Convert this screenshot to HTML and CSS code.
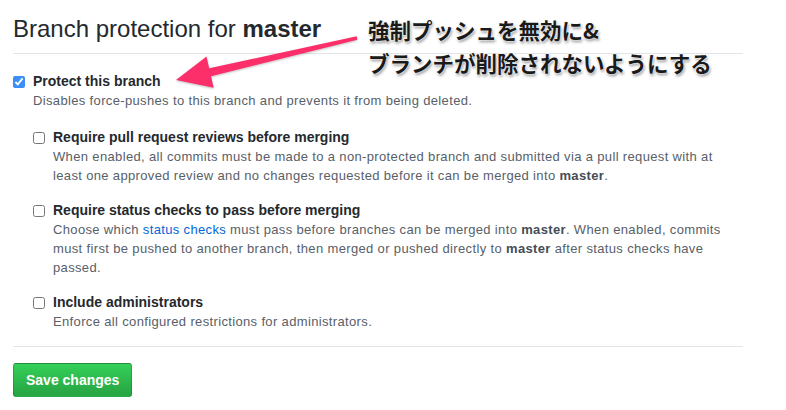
FILE: index.html
```html
<!DOCTYPE html>
<html lang="en">
<head>
    <meta charset="UTF-8">
    <meta name="viewport" content="width=device-width, initial-scale=1.0">
    <title>Branch protection</title>

    <link rel="stylesheet" href="styles.css">

</head>
<body>

    <div class="page">
        <!-- 标题 -->
        <div class="subhead">
            <h2>Branch protection for <strong>master</strong></h2>
        </div>

        <!-- 保护分支 -->
        <div class="option">
            <input type="checkbox" checked>
            <div>
                <p class="label">Protect this branch</p>
                <p class="note">Disables force-pushes to this branch and prevents it from being deleted.</p>

                <div class="option">
                    <input type="checkbox">
                    <div>
                        <p class="label">Require pull request reviews before merging</p>
                        <p class="note">When enabled, all commits must be made to a non-protected branch and submitted via a pull request with at least one approved review and no changes requested before it can be merged into <strong>master</strong>.</p>
                    </div>
                </div>

                <div class="option">
                    <input type="checkbox">
                    <div>
                        <p class="label">Require status checks to pass before merging</p>
                        <p class="note">Choose which <a href="#">status checks</a> must pass before branches can be merged into <strong>master</strong>. When enabled, commits must first be pushed to another branch, then merged or pushed directly to <strong>master</strong> after status checks have passed.</p>
                    </div>
                </div>

                <div class="option">
                    <input type="checkbox">
                    <div>
                        <p class="label">Include administrators</p>
                        <p class="note">Enforce all configured restrictions for administrators.</p>
                    </div>
                </div>
            </div>
        </div>

        <div class="actions">
            <button class="btn">Save changes</button>
        </div>
    </div>

    <!-- 注释 -->
    <div class="callout">
        <p>強制プッシュを無効に&amp;</p>
        <p>ブランチが削除されないようにする</p>
    </div>

    <svg class="arrow" width="210" height="80" viewBox="160 25 210 80">
        <polygon points="356.7,36.3 209.2,68.2 206.5,56.5 176,80 213.7,87.7 211,76.2 357.3,39.7" fill="#fd2f6b"/>
    </svg>

</body>
</html>
```

FILE: styles.css
```css
body {
    margin: 0;
    background: #fff;
    color: #24292e;
    font-family: "Liberation Sans", Arial, sans-serif;
    font-size: 14px;
}
p {
    margin: 0;
}
.page {
    width: 730px;
    padding-left: 13px;
}

.subhead {
    padding-top: 14px;
    padding-bottom: 9px;
    border-bottom: 1px solid #e1e4e8;
}
.subhead h2 {
    margin: 0;
    font-size: 24px;
    font-weight: normal;
    line-height: 30px;
}

.option {
    display: grid;
    grid-template-columns: 20px 1fr;
    margin-top: 17px;
}
.option + .option {
    margin-top: 15px;
}
.option input {
    width: 12px;
    height: 12px;
    margin: 5px 0 0 0;
    accent-color: #3b8ef5;
}
.label {
    font-weight: bold;
    line-height: 20px;
}
.note {
    font-size: 13px;
    letter-spacing: 0.35px;
    line-height: 19px;
    color: #586069;
}
.note strong {
    color: #444d56;
}
.note a {
    color: #0366d6;
    text-decoration: none;
}

.actions {
    margin-top: 15px;
    padding-top: 16px;
    border-top: 1px solid #e1e4e8;
}
.btn {
    font-family: inherit;
    font-size: 14px;
    font-weight: bold;
    line-height: 20px;
    padding: 6px 12px;
    color: #fff;
    background-color: #28a745;
    background-image: linear-gradient(-180deg, #34d058 0%, #28a745 90%);
    border: 1px solid rgba(27, 31, 35, 0.2);
    border-radius: 3px;
}

.callout {
    position: absolute;
    left: 368px;
    top: 13px;
    font-family: "Noto Sans CJK JP", sans-serif;
    font-size: 21.5px;
    font-weight: bold;
    line-height: 33px;
    color: #1a1a1a;
    text-shadow: 0 0 2px #fff, 0 0 2px #fff, 1px 2px 3px rgba(0, 0, 0, 0.45);
}

.arrow {
    position: absolute;
    left: 160px;
    top: 25px;
    filter: drop-shadow(0 1px 1px rgba(0, 0, 0, 0.25));
}
```
